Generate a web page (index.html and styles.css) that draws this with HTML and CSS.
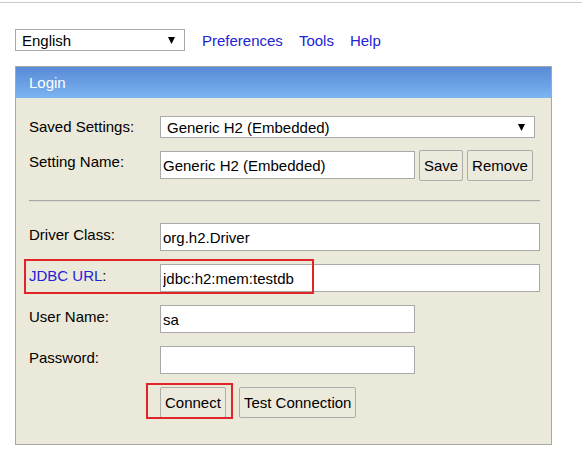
FILE: index.html
```html
<!DOCTYPE html>
<html>
<head>
<meta charset="utf-8">
<title>H2 Console</title>
<link rel="stylesheet" href="styles.css">
</head>
<body>
<div class="topline"></div>
<div class="toolbar">
  <div class="select lang"><span>English</span><svg class="arrow" width="7" height="7" viewBox="0 0 7 7"><polygon points="0,0 7,0 3.5,7"/></svg></div>
  <a class="link pref">Preferences</a>
  <a class="link tools">Tools</a>
  <a class="link help">Help</a>
</div>
<div class="panel">
  <div class="panel-head">Login</div>
  <div class="panel-body">
    <div class="row row-center">
      <span class="label">Saved Settings:</span>
      <div class="select saved"><span>Generic H2 (Embedded)</span><svg class="arrow" width="7" height="7" viewBox="0 0 7 7"><polygon points="0,0 7,0 3.5,7"/></svg></div>
    </div>
    <div class="row row-name">
      <span class="label">Setting Name:</span>
      <input class="field short name" type="text" value="Generic H2 (Embedded)">
      <button class="btn save">Save</button>
      <button class="btn remove">Remove</button>
    </div>
    <div class="divider"></div>
    <div class="row row-field first">
      <span class="label">Driver Class:</span>
      <input class="field long" type="text" value="org.h2.Driver">
    </div>
    <div class="row row-field">
      <span class="label"><a class="link">JDBC URL</a>:</span>
      <input class="field long" type="text" value="jdbc:h2:mem:testdb">
      <div class="mark mark-url"></div>
    </div>
    <div class="row row-field">
      <span class="label">User Name:</span>
      <input class="field short" type="text" value="sa">
    </div>
    <div class="row row-field">
      <span class="label">Password:</span>
      <input class="field short" type="password" value="">
    </div>
    <div class="row row-buttons">
      <button class="btn">Connect</button>
      <button class="btn">Test Connection</button>
      <div class="mark mark-connect"></div>
    </div>
  </div>
</div>
</body>
</html>
```
FILE: styles.css
```css
html, body {
  margin: 0;
  padding: 0;
  background: #ffffff;
}
body {
  font-family: "Liberation Sans", Arial, sans-serif;
  font-size: 15px;
  color: #000000;
}
.topline {
  height: 2px;
  border-bottom: 1px solid #c8c8c8;
}
.toolbar {
  display: flex;
  align-items: center;
  margin-top: 26px;
  padding-left: 15px;
  height: 22px;
}
.link {
  color: #2222d6;
  text-decoration: none;
  line-height: 17px;
}
.pref { margin-left: 17px; }
.tools { margin-left: 16px; }
.help { margin-left: 16px; }

.select {
  box-sizing: border-box;
  display: flex;
  align-items: center;
  justify-content: space-between;
  height: 22px;
  border: 1px solid #a9a9a9;
  background: #ffffff;
  padding: 0 9px 0 6px;
  line-height: 17px;
}
.arrow { display: block; }
.arrow polygon { fill: #000000; }
.lang { width: 170px; }
.saved { width: 375px; }

.panel {
  position: relative;
  margin: 15px 0 0 15px;
  width: 537px;
  box-sizing: border-box;
  border: 1px solid #a8a8a4;
  background: #ebe9d9;
}
.panel-head {
  height: 31px;
  line-height: 31px;
  padding-left: 13px;
  color: #ffffff;
  background: linear-gradient(to bottom, #5a8bd7 0%, #6aa0e4 55%, #7cb6f2 100%);
}
.panel-body {
  padding: 18px 11px 26px 13px;
}
.row {
  display: flex;
  align-items: flex-start;
  position: relative;
}
.label {
  flex: none;
  width: 131px;
  line-height: 17px;
  padding-top: 3px;
}
.row-center { align-items: center; }
.row-center .label { padding-top: 0; margin-top: -1px; }
.row-name { margin-top: 12px; }
.row-name .field { margin-top: 1px; }
.row-field { margin-top: 13px; }
.row-field.first { margin-top: 21px; }
.row-buttons {
  margin-top: 13px;
  padding-left: 131px;
  gap: 13px;
}

.field {
  box-sizing: border-box;
  height: 28px;
  margin: 0;
  padding: 0 2px;
  border: 1px solid #a9a9a9;
  background: #ffffff;
  font-family: "Liberation Sans", Arial, sans-serif;
  font-size: 15px;
  color: #000000;
  outline: none;
}
.long { width: 380px; }
.short { width: 255px; }

.btn {
  box-sizing: border-box;
  height: 31px;
  margin: 0;
  padding: 0 4px;
  border: 1px solid #adadaa;
  border-radius: 2px;
  background: #eceadd;
  font-family: "Liberation Sans", Arial, sans-serif;
  font-size: 15px;
  color: #000000;
}
.save { margin-left: 4px; width: 44px; }
.remove { margin-left: 4px; width: 66px; }

.divider {
  margin-top: 19px;
  height: 1px;
  border-top: 1px solid #a9a9a6;
  background: #dedccd;
}

.mark {
  position: absolute;
  box-sizing: border-box;
  border: 2px solid #e1232a;
  pointer-events: none;
}
.mark-url {
  left: -5px;
  top: -5px;
  width: 290px;
  height: 35px;
}
.mark-connect {
  left: 117px;
  top: -4px;
  width: 87px;
  height: 36px;
}
```
